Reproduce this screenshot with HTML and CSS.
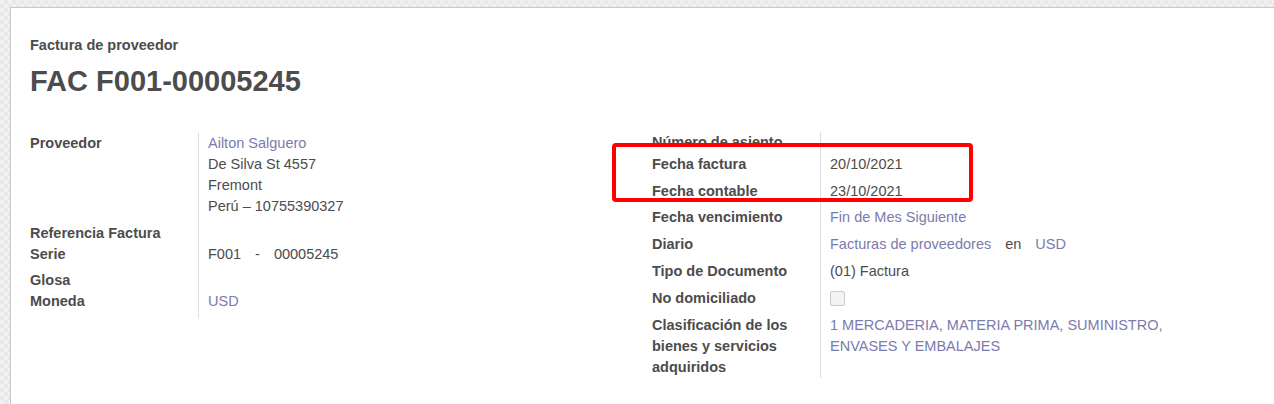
FILE: index.html
```html
<!DOCTYPE html>
<html lang="es">
<head>
<meta charset="utf-8">
<title>FAC F001-00005245</title>
<link rel="stylesheet" href="styles.css">
</head>
<body>
<div class="page">
  <div class="sheet">
    <div class="doc-type">Factura de proveedor</div>
    <h1 class="doc-name">FAC F001-00005245</h1>
    <div class="groups">
      <div class="group group-left">
        <div class="lbl tall">Proveedor</div>
        <div class="val tall">
          <a class="link">Ailton Salguero</a><br>
          De Silva St 4557<br>
          Fremont<br>
          Perú – 10755390327
        </div>
        <div class="lbl">Referencia Factura</div>
        <div class="val"></div>
        <div class="lbl mid">Serie</div>
        <div class="val mid"><span class="serie">F001</span><span class="serie">-</span><span>00005245</span></div>
        <div class="lbl">Glosa</div>
        <div class="val"></div>
        <div class="lbl tall">Moneda</div>
        <div class="val tall"><a class="link">USD</a></div>
      </div>
      <div class="group group-right">
        <div class="lbl first">Número de asiento</div>
        <div class="val first"></div>
        <div class="lbl tall">Fecha factura</div>
        <div class="val tall">20/10/2021</div>
        <div class="lbl mid">Fecha contable</div>
        <div class="val mid">23/10/2021</div>
        <div class="lbl tall">Fecha vencimiento</div>
        <div class="val tall"><a class="link">Fin de Mes Siguiente</a></div>
        <div class="lbl tall">Diario</div>
        <div class="val tall"><a class="link">Facturas de proveedores</a><span class="en">en</span><a class="link">USD</a></div>
        <div class="lbl tall">Tipo de Documento</div>
        <div class="val tall">(01) Factura</div>
        <div class="lbl tall">No domiciliado</div>
        <div class="val tall"><span class="check"></span></div>
        <div class="lbl">Clasificación de los bienes y servicios adquiridos</div>
        <div class="val"><a class="link">1 MERCADERIA, MATERIA PRIMA, SUMINISTRO, ENVASES Y EMBALAJES</a></div>
        <div class="highlight"></div>
      </div>
    </div>
  </div>
</div>
</body>
</html>
```

FILE: styles.css
```css
html, body {
  margin: 0;
  padding: 0;
}
body {
  font-family: "Liberation Sans", Arial, sans-serif;
  color: #4c4c4c;
  background-color: #f1f1f1;
  background-image:
    linear-gradient(45deg, #e9e9e9 25%, transparent 25%, transparent 75%, #e9e9e9 75%),
    linear-gradient(45deg, #e9e9e9 25%, transparent 25%, transparent 75%, #e9e9e9 75%);
  background-size: 8px 8px;
  background-position: 0 0, 4px 4px;
  height: 404px;
  overflow: hidden;
}
.page {
  padding: 7px 0 0 10px;
  height: 397px;
}
.sheet {
  background: #fff;
  border-top: 1px solid #c8c8d0;
  border-left: 1px solid #c8c8d0;
  height: 100%;
  box-sizing: border-box;
  padding: 27px 0 0 19px;
}
.doc-type {
  font-size: 14.5px;
  line-height: 21px;
  font-weight: bold;
}
.doc-name {
  margin: 7px 0 0 0;
  font-size: 29px;
  line-height: 36px;
  font-weight: bold;
}
.groups {
  display: flex;
  margin-top: 33px;
}
.group {
  display: grid;
  grid-template-columns: 169px 1fr;
  font-size: 14.5px;
  line-height: 21px;
  align-content: start;
}
.group-left {
  width: 622px;
  margin-top: 1px;
}
.group-right {
  width: 540px;
  position: relative;
}
.lbl {
  font-weight: bold;
  border-right: 1px solid #ddd;
  padding-right: 8px;
}
.val {
  padding-left: 9px;
}
.first {
  padding-bottom: 1px;
}
.tall {
  padding-bottom: 6px;
}
.mid {
  padding-bottom: 5px;
}
.link {
  color: #7c7bad;
  text-decoration: none;
}
.serie {
  margin-right: 14px;
}
.en {
  margin: 0 14px;
}
.check {
  display: inline-block;
  width: 13px;
  height: 13px;
  border: 1px solid #ccc;
  background: #f3f3f3;
  border-radius: 2px;
  vertical-align: top;
  margin-top: 3px;
}
.highlight {
  position: absolute;
  left: -40px;
  top: 11px;
  width: 361px;
  height: 59px;
  box-sizing: border-box;
  border: 4px solid #ff0000;
  border-radius: 4px;
}
```
